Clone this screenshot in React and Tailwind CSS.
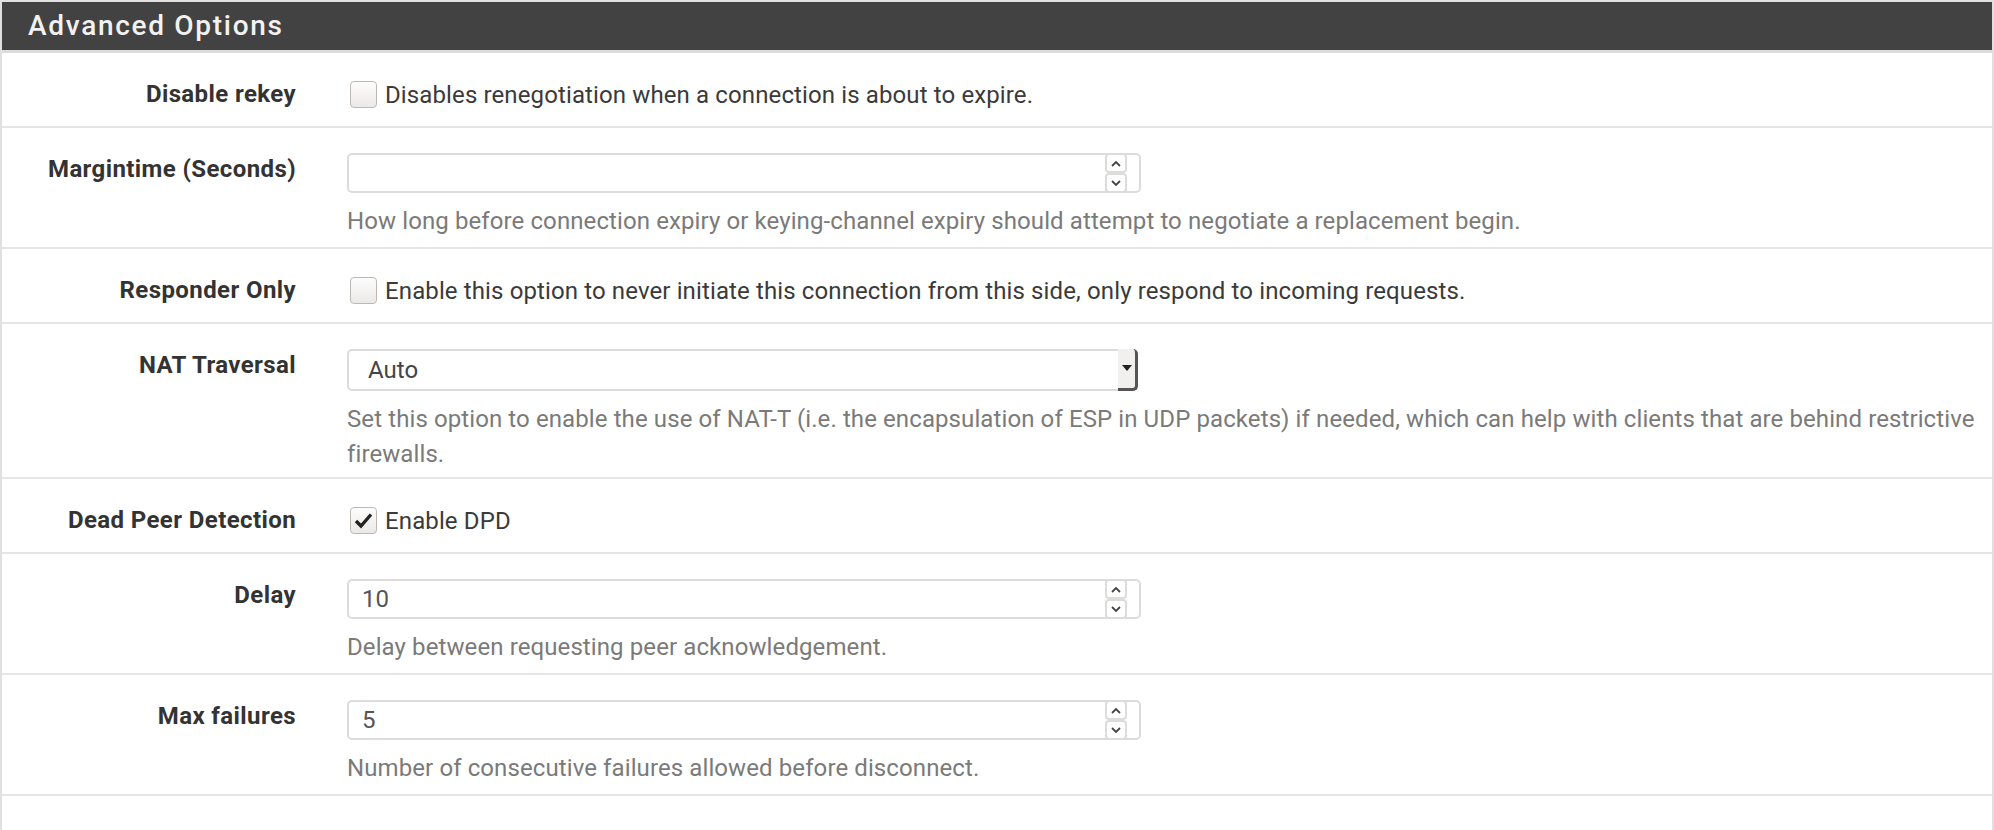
import { useState } from "react";

const Chevron = ({ dir }) => (
  <svg width="10" height="7" viewBox="0 0 10 7" className="text-[#444]">
    {dir === "up" ? (
      <path d="M1 6 L5 2 L9 6" fill="none" stroke="currentColor" strokeWidth="1.8" />
    ) : (
      <path d="M1 1 L5 5 L9 1" fill="none" stroke="currentColor" strokeWidth="1.8" />
    )}
  </svg>
);

const Checkbox = ({ checked }) => (
  <span className="w-[27px] h-[27px] shrink-0 rounded-[4px] border border-[#bdb8b4] bg-gradient-to-b from-[#fdfdfd] to-[#ebe9e7] flex items-center justify-center">
    {checked && (
      <svg width="19" height="17" viewBox="0 0 19 17">
        <path d="M2 9 L7 14 L17 2.5" fill="none" stroke="#222" strokeWidth="3.4" />
      </svg>
    )}
  </span>
);

const NumberInput = ({ value }) => (
  <div className="relative w-[794px] h-[40px] rounded-[5px] border-2 border-[#dedcda] bg-white flex items-center">
    <span className="pl-[13px] text-[24px] text-[#555]">{value}</span>
    <div className="absolute right-[12px] top-[-2px] bottom-[-2px] w-[22px] flex flex-col">
      <span className="flex-1 rounded-[4px] border-2 border-[#dedcda] bg-white flex items-center justify-center">
        <Chevron dir="up" />
      </span>
      <span className="flex-1 rounded-[4px] border-2 border-[#dedcda] bg-white flex items-center justify-center">
        <Chevron dir="down" />
      </span>
    </div>
  </div>
);

const Help = ({ children }) => (
  <p className="mt-[11px] text-[24px] leading-[35px] tracking-[0.1px] text-[#7a7a7a]">{children}</p>
);

const Row = ({ label, pb = "pb-[8px]", children }) => (
  <div className={`flex border-b-2 border-[#e6e6e6] pt-[25px] ${pb}`}>
    <div className="w-[294px] shrink-0 text-right text-[24px] leading-[33px] tracking-[0.4px] font-bold text-[#333]">
      {label}
    </div>
    <div className="flex-1 ml-[51px] pr-[2px]">{children}</div>
  </div>
);

const CheckRow = ({ label, checked, text }) => (
  <Row label={label} pb="pb-[15px]">
    <label className="flex items-center gap-[8px] h-[33px] text-[24px] tracking-[0.12px] text-[#3a3a3a] ml-[3px]">
      <Checkbox checked={checked} />
      <span>{text}</span>
    </label>
  </Row>
);

export default function App() {
  const [nat] = useState("Auto");

  return (
    <div className="w-[1994px] h-[830px] bg-white border-2 border-b-0 border-[#e0e0e0] font-['Roboto',sans-serif] overflow-hidden">
      <div className="h-[48px] bg-[#424242] border-b-[3px] border-[#dcdcdc] box-content flex items-center pl-[26px]">
        <h2 className="text-[28px] font-medium tracking-[1.7px] text-[#f2f2f2]">Advanced Options</h2>
      </div>

      <CheckRow
        label="Disable rekey"
        text="Disables renegotiation when a connection is about to expire."
      />

      <Row label="Margintime (Seconds)">
        <NumberInput value="" />
        <Help>
          How long before connection expiry or keying-channel expiry should attempt to negotiate a
          replacement begin.
        </Help>
      </Row>

      <CheckRow
        label="Responder Only"
        text="Enable this option to never initiate this connection from this side, only respond to incoming requests."
      />

      <Row label="NAT Traversal" pb="pb-[5px]">
        <div className="relative w-[791px] h-[42px] rounded-[5px] border-2 border-[#dedcda] bg-white flex items-center">
          <span className="pl-[19px] text-[24px] text-[#444]">{nat}</span>
          <span className="absolute right-[-2px] top-[-2px] bottom-[-2px] w-[20px] rounded-r-[5px] bg-[#f1f0ee] border-r-[3px] border-b-[3px] border-[#555] flex items-center justify-center">
            <svg width="10" height="7" viewBox="0 0 10 7">
              <path d="M0 0 H10 L5 6 Z" fill="#222" />
            </svg>
          </span>
        </div>
        <Help>
          Set this option to enable the use of NAT-T (i.e. the encapsulation of ESP in UDP packets)
          if needed, which can help with clients that are behind restrictive firewalls.
        </Help>
      </Row>

      <CheckRow label="Dead Peer Detection" checked text="Enable DPD" />

      <Row label="Delay">
        <NumberInput value="10" />
        <Help>Delay between requesting peer acknowledgement.</Help>
      </Row>

      <Row label="Max failures">
        <NumberInput value="5" />
        <Help>Number of consecutive failures allowed before disconnect.</Help>
      </Row>
    </div>
  );
}
